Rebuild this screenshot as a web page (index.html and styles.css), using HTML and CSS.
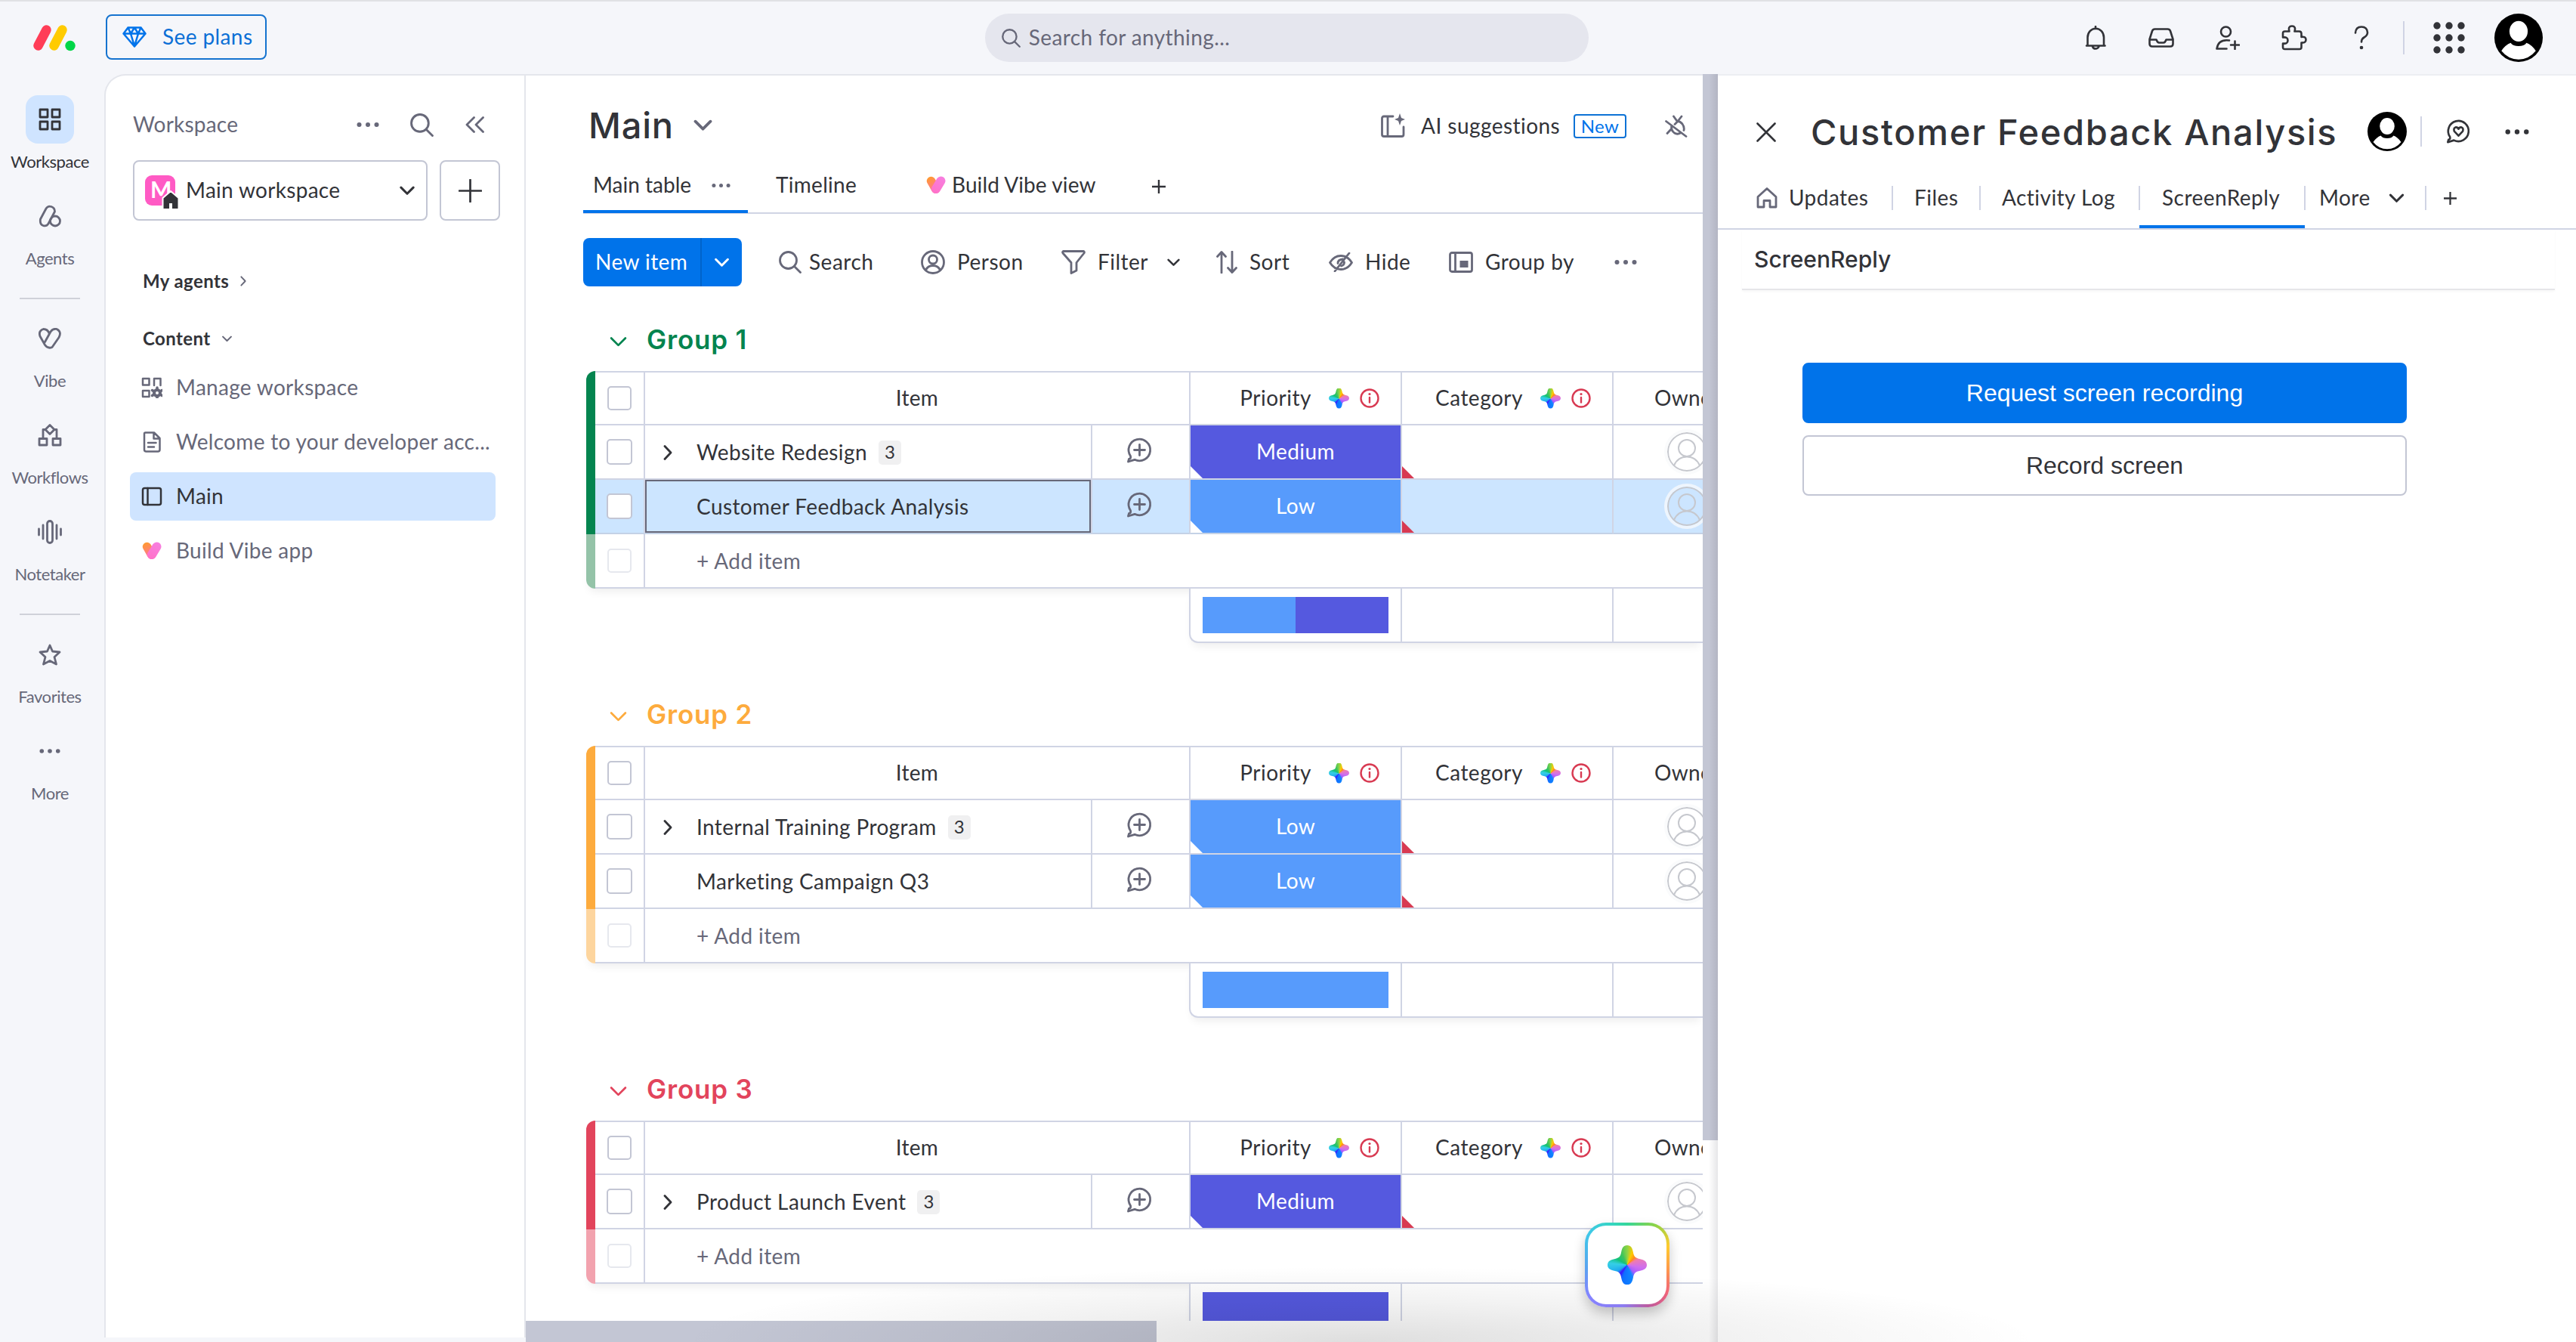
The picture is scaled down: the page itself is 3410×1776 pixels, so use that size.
FILE: index.html
```html
<!DOCTYPE html>
<html lang="en">
<head>
<meta charset="utf-8">
<title>Main</title>
<link rel="stylesheet" href="styles.css">
</head>
<body>
<svg class="defs" width="0" height="0" aria-hidden="true">
  <defs>
    <clipPath id="star" clipPathUnits="objectBoundingBox"><path d="M.5 0C.6 0 .63.07.65.17C.67.29.71.33.83.35C.93.37 1 .41 1 .5C1 .59.93.63.83.65C.71.67.67.71.65.83C.63.93.6 1 .5 1C.4 1 .37.93.35.83C.33.71.29.67.17.65C.07.63 0 .59 0 .5C0 .41.07.37.17.35C.29.33.33.29.35.17C.37.07.4 0 .5 0Z"/></clipPath>
    <linearGradient id="orange" gradientUnits="userSpaceOnUse" x1="3" y1="2" x2="14" y2="24"><stop offset="0" stop-color="#ff9a2e"/><stop offset="1" stop-color="#ff6fb0"/></linearGradient>
    <linearGradient id="pink" gradientUnits="userSpaceOnUse" x1="26" y1="2" x2="12" y2="24"><stop offset="0" stop-color="#f77fe0"/><stop offset="1" stop-color="#ff72c9"/></linearGradient>
    <symbol id="i-search" viewBox="0 0 30 30"><circle cx="12.5" cy="12.5" r="11"/><path d="M20.5 20.5L28.5 28.5"/></symbol>
    <symbol id="i-down" viewBox="0 0 18 12"><path d="M1.5 2L9 9.500L16.500 2"/></symbol>
    <symbol id="i-right" viewBox="0 0 12 20"><path d="M2 1.500L10 10L2 18.500"/></symbol>
    <symbol id="i-dots" viewBox="0 0 30 8"><g class="solid"><circle cx="3.500" cy="4" r="3"/><circle cx="15" cy="4" r="3"/><circle cx="26.500" cy="4" r="3"/></g></symbol>
    <symbol id="i-plus" viewBox="0 0 32 32"><path d="M16 1V31M1 16H31"/></symbol>
    <symbol id="i-heart" viewBox="0 0 28 26"><path d="M7 7L13.500 18.500" stroke="url(#orange)" stroke-width="12.500" stroke-linecap="round"/><path d="M21 7L14 18.500" stroke="url(#pink)" stroke-width="13" stroke-linecap="round"/></symbol>
    <symbol id="i-update" viewBox="0 0 36 36"><path d="M6.500 25.500A14.300 14.300 0 1 1 12 30.300L3.500 33L4.500 29.500Q7.500 29 6.500 25.500ZM18.500 10.500V24.500M11.500 17.500H25.500"/></symbol>
    <symbol id="i-person" viewBox="0 0 32 32"><circle cx="16" cy="16" r="14.500"/><circle cx="16" cy="12.500" r="5.500"/><path d="M6.500 26.500Q9 20.500 16 20.500T25.500 26.500"/></symbol>
    <symbol id="i-owner" viewBox="0 0 52 52"><circle cx="26" cy="26" r="25"/><circle cx="26" cy="21" r="11"/><path d="M9 44Q14 32.500 26 32.500T43 44"/></symbol>
    <symbol id="i-info" viewBox="0 0 26 26"><circle cx="13" cy="13" r="11.500"/><path d="M13 12V18.500"/><circle class="solid" cx="13" cy="7.500" r="1.600"/></symbol>
    <symbol id="i-avatar" viewBox="0 0 52 52"><circle cx="26" cy="26" r="26" fill="#000" stroke="none"/><ellipse cx="26" cy="19" rx="9.800" ry="11" fill="#fff" stroke="none"/><path d="M7.500 40Q12 33.500 17.500 31.500Q20 35 26 35T34.500 31.500Q40 33.500 44.500 40Q37 49.300 26 49.300T7.500 40Z" fill="#fff" stroke="none"/></symbol>
  </defs>
</svg>

<header class="topbar">
  <svg class="logo" viewBox="0 0 56 34"><path d="M6.500 27.500L17.500 6.500" stroke="#ff3d57" stroke-width="12.500" stroke-linecap="round"/><path d="M27.500 27.500L38.500 6.500" stroke="#ffcb00" stroke-width="12.500" stroke-linecap="round"/><circle cx="49" cy="27.500" r="6.700" fill="#00d647"/></svg>
  <button class="plans"><svg class="ic" width="32" height="28" viewBox="0 0 32 28"><path d="M7.500 1.500H24.500L30.500 9.500L16 26.500L1.500 9.500ZM1.500 9.500H30.500M11 9.500L16 26L21 9.500M7.500 1.500L11 9.500L16 1.500L21 9.500L24.500 1.500"/></svg><span>See plans</span></button>
  <div class="searchbox"><svg class="ic" width="25" height="25"><use href="#i-search"/></svg><span>Search for anything...</span></div>
  <nav class="topicons">
    <svg class="ic" width="32" height="32" viewBox="0 0 32 32"><path d="M16 1V4M4 26.500H28.500M5.500 26V15.500A10.500 11.500 0 0 1 27 15.500V26M12 27.500Q13 30.500 16 30.500T20.500 27.500"/></svg>
    <svg class="ic" width="34" height="26" viewBox="0 0 34 26"><path d="M8.500 1.500H25.500Q28 1.500 29 4L32.500 15V21Q32.500 24.500 29 24.500H5Q1.500 24.500 1.500 21V15L5 4Q6 1.500 8.500 1.500ZM1.500 15.500H10.500Q12 19.500 14 19.500H20Q22 19.500 23.500 15.500H32.500"/></svg>
    <svg class="ic" width="32" height="32" viewBox="0 0 32 32"><circle cx="13.500" cy="8" r="6.500"/><path d="M18 19.500Q3.500 17.500 1.500 30.500H14.500M25.500 20.500V31M20 25.500H31"/></svg>
    <svg class="ic" width="34" height="34" viewBox="0 0 34 34"><path d="M4.500 8.500H10.500Q8.500 1.500 14 1.500T17.500 8.500H23.500Q26.500 8.500 26.500 11.500V16Q32.500 15 32.500 19.500T26.500 23.500V29.500Q26.500 32 24 32H4.500Q2 32 2 29.500V24.500Q8.500 25.500 8.500 20.500T2 16.500V11Q2 8.500 4.500 8.500Z"/></svg>
    <svg class="ic" width="20" height="32" viewBox="0 0 20 32"><path d="M2 9.500Q2.500 1.500 10 1.500T18 9Q18 13 13.500 15.500Q10 17.500 10 21.500"/><circle class="solid" cx="10" cy="29" r="2.300"/></svg>
    <i class="vline"></i>
    <svg class="grid9" width="42" height="42" viewBox="0 0 42 42"><circle cx="5" cy="5" r="4.700"/><circle cx="21" cy="5" r="4.700"/><circle cx="37" cy="5" r="4.700"/><circle cx="5" cy="21" r="4.700"/><circle cx="21" cy="21" r="4.700"/><circle cx="37" cy="21" r="4.700"/><circle cx="5" cy="37" r="4.700"/><circle cx="21" cy="37" r="4.700"/><circle cx="37" cy="37" r="4.700"/></svg>
    <svg class="me" width="64" height="64"><use href="#i-avatar"/></svg>
  </nav>
</header>

<div class="shell">
  <aside class="rail">
    <a class="railitem on"><span><svg class="ic" width="30" height="30" viewBox="0 0 30 30"><path d="M2 2H12V12H2ZM18 2H28V12H18ZM2 18H12V28H2ZM18 18H28V28H18Z"/></svg></span>Workspace</a>
    <a class="railitem"><span><svg class="ic" width="30" height="30" viewBox="0 0 30 30"><path d="M2.500 19L10 5Q12.500 1 17 2.500T21.500 9L13 25Q10.500 29 6 27.500T2.500 19Z"/><circle cx="22" cy="21.500" r="6.500"/></svg></span>Agents</a>
    <hr>
    <a class="railitem"><span><svg class="ic" width="30" height="28" viewBox="0 0 30 28"><path d="M14 7Q12 1.500 6.500 1.500Q-.5 4 2 11L8.500 22.500Q12.500 28 18 25.500L27 12.500Q31 5 24 1.500Q19 .5 16 5L8.500 18.500"/></svg></span>Vibe</a>
    <a class="railitem"><span><svg class="ic" width="32" height="30" viewBox="0 0 32 30"><path d="M16 1.500L22 7.500L16 13.500L10 7.500ZM2 19.500H12V28H2ZM20 19.500H30V28H20ZM11 7.500H7V19.500M21 7.500H25V19.500"/></svg></span>Workflows</a>
    <a class="railitem"><span><svg class="ic" width="32" height="32" viewBox="0 0 32 32"><rect x="12.500" y="1.500" width="7" height="29" rx="3.500"/><path d="M1.500 12V20M7 7V25M25 7V25M30.500 12V20"/></svg></span>Notetaker</a>
    <hr>
    <a class="railitem"><span><svg class="ic" width="30" height="29" viewBox="0 0 30 29"><path d="M15 2L18.500 10L28 11L21 17.500L23.500 27L15 22.500L6.500 27L9 17.500L2 11L11.500 10Z"/></svg></span>Favorites</a>
    <a class="railitem"><span><svg class="ic" width="28" height="8"><use href="#i-dots"/></svg></span>More</a>
  </aside>

  <aside class="panel">
    <div class="phead"><b>Workspace</b><svg class="ic" width="30" height="8"><use href="#i-dots"/></svg><svg class="ic" width="31" height="31"><use href="#i-search"/></svg><svg class="ic" width="26" height="22" viewBox="0 0 26 22"><path d="M11.500 1.500L2 11L11.500 20.500M23.500 1.500L14 11L23.500 20.500"/></svg></div>
    <div class="pick">
      <div class="wsname"><span class="wslogo">M<svg width="24" height="26" viewBox="0 0 24 26"><path d="M12 1L22.500 10V25H1.500V10Z" fill="#323338" stroke="#fff" stroke-width="2"/><path d="M12 17V24" stroke="#fff" stroke-width="4"/></svg></span><span class="wstext">Main workspace</span><svg class="ic" width="20" height="13"><use href="#i-down"/></svg></div>
      <div class="wsadd"><svg class="ic" width="31" height="31"><use href="#i-plus"/></svg></div>
    </div>
    <h4 class="agents">My agents <svg class="ic" width="8" height="14"><use href="#i-right"/></svg></h4>
    <h4 class="content">Content <svg class="ic" width="13" height="9"><use href="#i-down"/></svg></h4>
    <ul class="menu">
      <li><svg class="ic" width="28" height="28" viewBox="0 0 28 28"><path d="M2 2H10.500V10.500H2ZM2 18H10.500V26H2ZM17 11V2H25.500V11"/><circle cx="21" cy="21" r="4" stroke-width="4"/><path d="M21 14V16M21 26V28M14.500 17.500L16 18.500M26 23.500L27.500 24.500M27.500 17.500L26 18.500M14.500 24.500L16 23.500" stroke-width="3.500"/></svg>Manage workspace</li>
      <li><svg class="ic" width="28" height="28" viewBox="0 0 28 28"><path d="M5.500 1.500H17L24.500 9V24Q24.500 26.500 22 26.500H6.500Q4 26.500 4 24V3Q4 1.500 5.500 1.500ZM16.500 2V9.500H24M9 15H19.500M9 20.500H17"/></svg>Welcome to your developer acc...</li>
      <li class="on"><svg class="ic" width="28" height="28" viewBox="0 0 28 28"><rect x="2" y="3" width="24" height="22" rx="2.500"/><path d="M8.500 3V25"/></svg>Main</li>
      <li><svg width="28" height="24"><use href="#i-heart"/></svg>Build Vibe app</li>
    </ul>
  </aside>

  <main class="board">
    <div class="boardbody">
      <div class="bhead">
        <h1>Main</h1><svg class="ic" width="25" height="16"><use href="#i-down"/></svg>
        <div class="ai"><svg class="ic" width="34" height="34" viewBox="0 0 34 34"><path d="M17 4H5Q2.500 4 2.500 6.500V28Q2.500 30.500 5 30.500H28.500Q31 30.500 31 28V18M10 4V30"/><path class="solid" d="M26 0L28 6L33 8L28 10L26 16L24 10L19 8L24 6Z"/></svg><span>AI suggestions</span><em>New</em></div>
        <svg class="ic plug" width="30" height="30" viewBox="0 0 30 30"><path d="M1.500 8.500L28 28.500M11.500 2L16.500 9M22 2L16.500 9M13 12.500L17 8.500Q20 8.500 23 12Q26 16 25 20.500M8.500 16Q8.500 21 12.500 24Q16.500 26.500 20.500 24M3 24.500L9 18"/></svg>
      </div>
      <nav class="btabs">
        <a class="on"><span>Main table</span><svg class="ic" width="25" height="7"><use href="#i-dots"/></svg></a>
        <a class="t2">Timeline</a>
        <a class="t3"><svg width="28" height="24"><use href="#i-heart"/></svg><span>Build Vibe view</span></a>
        <svg class="ic t4" width="18" height="18" viewBox="0 0 18 18"><path d="M9 0V18M0 9H18" stroke-width="2.400"/></svg>
      </nav>
      <div class="tools">
        <div class="new"><span>New item</span><i><svg class="ic" width="19" height="13"><use href="#i-down"/></svg></i></div>
        <div class="tool s"><svg class="ic" width="30" height="30"><use href="#i-search"/></svg>Search</div>
        <div class="tool"><svg class="ic" width="32" height="32"><use href="#i-person"/></svg>Person</div>
        <div class="tool"><svg class="ic" width="32" height="32" viewBox="0 0 32 32"><path d="M2.500 1.500H29.500Q31 2.500 30 4L20 16.500V27L13 30.500V16.500L2 4Q1 2.500 2.500 1.500Z"/></svg>Filter</div>
        <svg class="ic dark" width="17" height="11"><use href="#i-down"/></svg>
        <div class="tool"><svg class="ic" width="28" height="30" viewBox="0 0 28 30"><path d="M7 29V2M1.500 7.500L7 1.500L12.500 7.500M21 1V28M15.500 22.500L21 28.500L26.500 22.500"/></svg>Sort</div>
        <div class="tool"><svg class="ic" width="32" height="26" viewBox="0 0 32 26"><path d="M1.500 13.500Q7 4.500 16 4.500T30.500 13.500Q25 22.500 16 22.500T1.500 13.500ZM27 1L8 25M18.500 9Q12 9.500 12 14.500M20.500 13Q20.500 17 16.500 18"/></svg>Hide</div>
        <div class="tool"><svg class="ic" width="32" height="28" viewBox="0 0 32 28"><rect x="1.500" y="1.500" width="29" height="25" rx="2.500"/><path d="M8.500 2V26"/><rect class="solid" x="14.500" y="12" width="11" height="9"/></svg>Group by</div>
        <svg class="ic" width="30" height="8"><use href="#i-dots"/></svg>
      </div>

      <section class="group green">
        <h2><svg class="ic" width="23" height="15"><use href="#i-down"/></svg>Group 1</h2>
        <div class="table">
          <div class="row head"><i class="bar"></i><div><b class="cb"></b></div><div class="name">Item</div><div class="col">Priority<i class="star"></i><svg class="ic" width="26" height="26"><use href="#i-info"/></svg></div><div class="col">Category<i class="star"></i><svg class="ic" width="26" height="26"><use href="#i-info"/></svg></div><div class="own">Owner</div></div>
          <div class="row"><i class="bar"></i><div><b class="cb"></b></div><div class="item"><svg class="ic" width="14" height="20"><use href="#i-right"/></svg>Website Redesign<sup>3</sup></div><div class="upd"><svg class="ic" width="36" height="36"><use href="#i-update"/></svg></div><div class="st med">Medium</div><div class="cat"></div><div class="own"><svg class="ic" width="52" height="52"><use href="#i-owner"/></svg></div></div>
          <div class="row sel"><i class="bar"></i><div><b class="cb"></b></div><div class="item">Customer Feedback Analysis</div><div class="upd"><svg class="ic" width="36" height="36"><use href="#i-update"/></svg></div><div class="st low">Low</div><div class="cat"></div><div class="own"><svg class="ic" width="52" height="52"><use href="#i-owner"/></svg></div></div>
          <div class="row add"><i class="bar"></i><div><b class="cb"></b></div><div class="item">+ Add item</div></div>
        </div>
        <div class="sum"><div><i class="low"></i><i class="med"></i></div><div></div><div></div></div>
      </section>

      <section class="group yellow">
        <h2><svg class="ic" width="23" height="15"><use href="#i-down"/></svg>Group 2</h2>
        <div class="table">
          <div class="row head"><i class="bar"></i><div><b class="cb"></b></div><div class="name">Item</div><div class="col">Priority<i class="star"></i><svg class="ic" width="26" height="26"><use href="#i-info"/></svg></div><div class="col">Category<i class="star"></i><svg class="ic" width="26" height="26"><use href="#i-info"/></svg></div><div class="own">Owner</div></div>
          <div class="row"><i class="bar"></i><div><b class="cb"></b></div><div class="item"><svg class="ic" width="14" height="20"><use href="#i-right"/></svg>Internal Training Program<sup>3</sup></div><div class="upd"><svg class="ic" width="36" height="36"><use href="#i-update"/></svg></div><div class="st low">Low</div><div class="cat"></div><div class="own"><svg class="ic" width="52" height="52"><use href="#i-owner"/></svg></div></div>
          <div class="row"><i class="bar"></i><div><b class="cb"></b></div><div class="item">Marketing Campaign Q3</div><div class="upd"><svg class="ic" width="36" height="36"><use href="#i-update"/></svg></div><div class="st low">Low</div><div class="cat"></div><div class="own"><svg class="ic" width="52" height="52"><use href="#i-owner"/></svg></div></div>
          <div class="row add"><i class="bar"></i><div><b class="cb"></b></div><div class="item">+ Add item</div></div>
        </div>
        <div class="sum"><div><i class="low"></i></div><div></div><div></div></div>
      </section>

      <section class="group red">
        <h2><svg class="ic" width="23" height="15"><use href="#i-down"/></svg>Group 3</h2>
        <div class="table">
          <div class="row head"><i class="bar"></i><div><b class="cb"></b></div><div class="name">Item</div><div class="col">Priority<i class="star"></i><svg class="ic" width="26" height="26"><use href="#i-info"/></svg></div><div class="col">Category<i class="star"></i><svg class="ic" width="26" height="26"><use href="#i-info"/></svg></div><div class="own">Owner</div></div>
          <div class="row"><i class="bar"></i><div><b class="cb"></b></div><div class="item"><svg class="ic" width="14" height="20"><use href="#i-right"/></svg>Product Launch Event<sup>3</sup></div><div class="upd"><svg class="ic" width="36" height="36"><use href="#i-update"/></svg></div><div class="st med">Medium</div><div class="cat"></div><div class="own"><svg class="ic" width="52" height="52"><use href="#i-owner"/></svg></div></div>
          <div class="row add"><i class="bar"></i><div><b class="cb"></b></div><div class="item">+ Add item</div></div>
        </div>
        <div class="sum"><div><i class="med"></i></div><div></div><div></div></div>
      </section>
    </div>
    <div class="hscroll"></div>
    <button class="fab"><i class="star"></i></button>
  </main>

  <div class="gutter"><i></i></div>

  <section class="detail">
    <div class="dhead">
      <svg class="ic close" width="26" height="26" viewBox="0 0 26 26"><path d="M1.500 1.500L24.500 24.500M24.500 1.500L1.500 24.500" stroke-width="2.600"/></svg>
      <h1>Customer Feedback Analysis</h1>
      <svg width="52" height="52"><use href="#i-avatar"/></svg>
      <i class="vline"></i>
      <svg class="ic" width="34" height="34" viewBox="0 0 36 36"><path d="M6.500 25.500A14.300 14.300 0 1 1 12 30.300L3.500 33L4.500 29.500Q7.500 29 6.500 25.500ZM18.500 24L12.500 17.500Q11 13 15 12Q17.500 12 18.500 14.500Q19.500 12 22 12Q26 13 24.500 17.500Z"/></svg>
      <svg class="ic dd" width="32" height="9"><use href="#i-dots"/></svg>
    </div>
    <nav class="dtabs">
      <a class="d1"><svg class="ic" width="28" height="28" viewBox="0 0 28 28"><path d="M2 26V12.500L14 1.500L26 12.500V26H18V17.500H10V26Z"/></svg>Updates</a>
      <a class="d2">Files</a>
      <a class="d3">Activity Log</a>
      <a class="d4 on">ScreenReply</a>
      <a class="d5">More<svg class="ic dark" width="21" height="13"><use href="#i-down"/></svg></a>
      <svg class="ic dark" width="17" height="17" viewBox="0 0 18 18"><path d="M9 0V18M0 9H18" stroke-width="2.400"/></svg>
    </nav>
    <h3>ScreenReply</h3>
    <div class="acts"><button class="primary">Request screen recording</button><button>Record screen</button></div>
  </section>
</div>
<div class="shade"></div>
</body>
</html>
```
FILE: styles.css
```css
*{box-sizing:border-box;margin:0;padding:0}
body{position:relative;width:3410px;height:1776px;overflow:hidden;background:#f5f6fa;color:#323338;font:400 28px/1.2 Lato,"Open Sans",sans-serif;letter-spacing:.3px;display:flex;flex-direction:column}
.defs{position:absolute}
svg{display:block;flex:none}
button{font:inherit;letter-spacing:inherit;color:inherit;background:none;border:0}
i,em{font-style:normal}
i{display:block}
.ic{fill:none;stroke:currentColor;stroke-width:2.8;stroke-linecap:round;stroke-linejoin:round;color:#676879}
.solid{fill:currentColor;stroke:none}
.dark{color:#323338}
.vline{width:2px;background:#d0d4e4}

/* top bar */
.topbar{height:98px;flex:none;display:flex;border-top:2px solid #e0e1e4;padding:17px 44px 0 44px;align-items:flex-start}
.logo{width:56px;height:34px;margin:14px 40px 0 0;overflow:visible;fill:none}
.plans{width:213px;height:60px;border:2px solid #1573cf;border-radius:8px;color:#0b6fd6;display:flex;align-items:center;padding-left:20px;gap:21px;letter-spacing:.4px}
.plans .ic{color:#0073ea;stroke-width:2.5}
.searchbox{width:800px;height:64px;margin:-1px 0 0 951px;border-radius:32px;background:#e5e6ee;color:#676879;display:flex;align-items:center;padding-left:22px;gap:11px;letter-spacing:.4px}
.topicons{margin-left:655px;display:flex;height:64px;align-items:center;margin-top:-1px}
.topicons .ic{color:#323338;stroke-width:2.6}
.topicons .ic:nth-child(2){margin-left:54px}
.topicons .ic:nth-child(3){margin-left:55px}
.topicons .ic:nth-child(4){margin-left:55px}
.topicons .ic:nth-child(5){margin-left:62px}
.topicons .vline{height:44px;margin-left:45px}
.grid9{fill:#323338;margin-left:38px}
.me{margin-left:39px}

.shell{flex:1;display:flex;min-height:0}

/* icon rail */
.rail{width:138px;padding:28px 6px 0 0;display:flex;flex-direction:column;align-items:center;gap:26px}
.railitem{display:flex;flex-direction:column;align-items:center;gap:10px;height:102px;font-size:22px;line-height:28px;letter-spacing:-.45px;color:#676879;white-space:nowrap}
.railitem span{width:64px;height:64px;border-radius:16px;display:grid;place-items:center}
.railitem.on{color:#323338}
.railitem.on span{background:#cfe4ff}
.railitem.on .ic{color:#323338}
.rail hr{width:80px;border:0;border-top:2px solid #cfd1d9;margin:12px 0 -6px}

/* workspace panel */
.panel{width:558px;margin-bottom:6px;background:#fff;border:2px solid #e4e6ec;border-bottom:0;border-radius:28px 0 0 0;padding:43px 32px 0 32px}
.phead{height:44px;display:flex;align-items:center;padding-left:4px}
.phead b{font-weight:400;width:296px;color:#676879;letter-spacing:.2px}
.phead .ic:nth-child(3){margin-left:41px}
.phead .ic:nth-child(4){margin-left:42px}
.pick{margin:25px 0 0 4px;display:flex;gap:16px}
.wsname{width:390px;height:80px;border:2px solid #c3c6d4;border-radius:8px;display:flex;align-items:center;padding-left:14px}
.wslogo{position:relative;width:40px;height:40px;border-radius:9px;background:#ff5ac4;color:#fff;font-weight:700;font-size:30px;line-height:36px;padding-left:7px}
.wslogo svg{position:absolute;left:22px;top:20px}
.wstext{width:297px;padding-left:14px}
.wsname .ic,.wsadd .ic{color:#323338}
.wsadd{width:80px;height:80px;border:2px solid #c3c6d4;border-radius:8px;display:grid;place-items:center}
.panel h4{font-weight:700;font-size:24px;height:40px;display:flex;align-items:center;padding-left:17px;gap:15px;letter-spacing:.4px}
.agents{margin-top:60px}
.content{margin-top:36px}
.menu{list-style:none;display:flex;flex-direction:column;gap:8px;margin-top:12px;padding-top:1px}
.menu li{width:484px;height:64px;border-radius:8px;display:flex;align-items:center;padding-left:15px;gap:18px;color:#676879;white-space:nowrap}
.menu .on{background:#cfe4ff;color:#323338}
.menu .on .ic{color:#323338}
.menu .ic{stroke-width:2.5}

/* board */
.board{position:relative;width:1558px;background:#fff;border-top:2px solid #e4e6ec;display:flex;flex-direction:column}
.boardbody{height:1648px;overflow:hidden;padding-left:76px}
.hscroll{width:835px;height:28px;background:#c3c6d4}
.bhead{height:76px;margin-top:28px;display:flex;align-items:center}
h1{font:500 47px/60px Inter,sans-serif;letter-spacing:.8px;white-space:nowrap}
.bhead h1{width:139px;padding-left:7px;margin-right:7px}
.ai{display:flex;align-items:center;margin:2px 0 0 884px;color:#323338}
.ai span{margin-left:20px;width:202px;letter-spacing:.45px}
.ai em{width:70px;height:32px;border:2px solid #0d72d6;border-radius:4px;color:#0073ea;font-size:24px;line-height:28px;text-align:center}
.plug{margin:2px 0 0 51px}
.btabs{height:79px;padding-top:5px;display:flex;align-items:center;border-bottom:2px solid #d0d4e4;white-space:nowrap}
.btabs .on{position:relative;width:218px;height:100%;display:flex;align-items:center;padding-left:13px;gap:25px}
.btabs .on::after{content:"";position:absolute;left:0;right:0;bottom:-1px;height:4px;background:#0073ea}
.btabs .on span{width:132px;letter-spacing:0}
.t2{margin-left:37px;width:198px;letter-spacing:.3px}
.t3{display:flex;align-items:center;width:299px;letter-spacing:.1px}
.t3 span{margin-left:7px}
.t4{color:#323338;margin:3px 0 0 1px}
.tools{height:128px;margin-bottom:8px;display:grid;grid-template-columns:259px 188px 186px 140px 65px 149px 159px 219px auto;align-items:center}
.new{width:210px;height:64px;border-radius:8px;background:#0073ea;color:#fff;display:flex;align-items:center;overflow:hidden}
.new span{width:155px;padding-left:16px;letter-spacing:.45px}
.new i{height:100%;flex:1;border-left:2px solid #0063cb;display:grid;place-items:center}
.new .ic{color:#fff}
.tool{display:flex;align-items:center;gap:16px;letter-spacing:.5px}
.tool.s{gap:10px}

/* groups */
.group{height:496px}
.green{--c:#04844f;--l:#94c3a8}
.yellow{--c:#fdab3d;--l:#fdd59e}
.red{--c:#e2445c;--l:#f2a2ae}
.group h2{height:72px;display:flex;align-items:center;padding:0 0 13px 35px;gap:26px;color:var(--c);font:600 35px/40px Inter,sans-serif;letter-spacing:.8px}
.group h2 .ic{color:var(--c);margin-top:8px;stroke-width:2.2}
.table{margin-left:4px;border-radius:12px 0 0 12px;box-shadow:0 8px 12px -4px rgba(0,0,0,.07)}
.row{height:72px;display:grid;grid-template-columns:12px 66px 592px 130px 280px 280px 118px}
.row>div{border-right:2px solid #d0d4e4;border-bottom:2px solid #d0d4e4;display:flex;align-items:center;justify-content:center;white-space:nowrap;background:#fff}
.row>div:last-child{border-right:0;overflow:hidden}
.bar{background:var(--c)}
.head>div{border-top:2px solid #d0d4e4}
.head .bar{border-top-left-radius:12px}
.head .name{grid-column:span 2}
.head .col{justify-content:flex-end;padding-right:28px;letter-spacing:.5px}
.head .col .ic{color:#d83a52;stroke-width:2.4;margin-left:14px}
.star{width:27px;height:27px;margin-left:23px;clip-path:url(#star);background:conic-gradient(#8bd346 0deg,#ffcb00 22deg,#ff8a1e 45deg,#f07cae 62deg,#cf6eee 100deg,#a85cff 138deg,#0f86ff 158deg,#0f6dff 200deg,#3b14ff 218deg,#1fa8f0 238deg,#35cfe6 275deg,#12c27a 300deg,#3fc45a 335deg,#8bd346 360deg)}
.row>.own{justify-content:flex-start;padding-left:54px}
.row:not(.head)>.own{padding-left:71px}
.own .ic{color:#c6c8ce;stroke-width:2;background:#fff;border-radius:50%;box-shadow:0 0 0 4px #fafbfc}
.cb{width:34px;height:34px;border:2px solid #c3c6d4;border-radius:5px;background:#fff}
.head .cb{width:32px;height:32px}
.row>.item{justify-content:flex-start;padding-left:68px;padding-top:1px;position:relative;letter-spacing:.4px}
.item .ic{position:absolute;left:23px;top:26px;color:#323338}
.item sup{width:30px;height:32px;margin-left:15px;border-radius:5px;background:#f0f0f1;font-size:24px;line-height:30px;text-align:center;letter-spacing:0}
.row>.upd{padding:0 4px 4px 0}
.row .st{color:#fff;position:relative;letter-spacing:.4px}
.row .med,.sum .med{background:#5559df}
.row .low,.sum .low{background:#579bfc}
.row>.st{background-clip:padding-box}
.st::before,.cat::before{content:"";position:absolute;left:0;bottom:0;width:16px;height:16px;background:#fff;clip-path:polygon(0 0,100% 100%,0 100%)}
.cat{position:relative}
.cat::before{background:#d83a52}
.sel>div{background-color:#cce5ff;border-bottom-color:#c4d2e6}
.sel .item{box-shadow:inset 0 0 0 2px #676879}
.sel .own .ic{background:#cce5ff;box-shadow:0 0 0 4px #eef5fd}
.add .bar{background:var(--l);border-bottom-left-radius:12px}
.add>.item{grid-column:3/-1;color:#676879}
.add .cb{width:32px;height:32px;border-color:#e6e8ee}
.sum{margin-left:802px;height:72px;display:grid;grid-template-columns:280px 280px 118px;border:2px solid #d0d4e4;border-width:0 0 2px 2px;border-bottom-left-radius:12px;background:#fff;box-shadow:0 8px 12px -4px rgba(0,0,0,.07)}
.sum>div{border-right:2px solid #d0d4e4;display:flex;padding:11px 16px}
.sum>div:last-child{border-right:0}
.sum i{flex:1;height:48px}

.fab{position:absolute;z-index:3;left:1402px;top:1518px;width:112px;height:112px;border:4px solid transparent;border-radius:28px;background:linear-gradient(#fff,#fff) padding-box,conic-gradient(#35d69a 0deg,#8bd346 35deg,#ffcb2e 65deg,#ff9a4a 95deg,#f0647a 125deg,#c05a9a 150deg,#8c7cf0 185deg,#8583ff 230deg,#5aa2f0 265deg,#3fc8e8 310deg,#35d6c0 340deg,#35d69a 360deg) border-box;box-shadow:0 8px 16px rgba(0,0,0,.22);display:grid;place-items:center}
.fab .star{width:52px;height:52px;margin:0}

.gutter{width:20px;background:linear-gradient(90deg,#fff 40%,#e6e6e8)}
.gutter i{height:1411px;background:linear-gradient(90deg,#c3c6d4 40%,#b3b5c3)}

/* item detail */
.detail{flex:1;background:#fff;border-top:2px solid #eceef2}
.dhead{display:flex;align-items:center;height:52px;margin-top:48px;padding-left:51px}
.dhead h1{margin:2px 0 0 46px;width:737px;letter-spacing:1.65px}
.close{color:#323338;margin-top:2px}
.dhead .vline{height:40px;margin:0 31px 0 18px}
.dhead .ic{color:#323338}
.dd{margin-left:45px}
.dtabs{height:104px;padding:22px 0 0 51px;display:flex;align-items:center;border-bottom:2px solid #d0d4e4;letter-spacing:.45px;white-space:nowrap}
.dtabs a{height:32px;border-right:2px solid #d0d4e4;display:flex;align-items:center}
.d1{width:181px;gap:15px}
.dtabs .d2{width:116px;padding-left:28px}
.dtabs .d3{width:211px;padding-left:28px}
.dtabs .d4{width:219px;padding-left:29px;position:relative}
.d4::after{content:"";position:absolute;left:-1px;width:219px;bottom:-24px;height:4px;background:#0073ea}
.dtabs .d5{width:160px;padding-left:18px;gap:24px;margin-right:23px}
.detail h3{margin:0 28px 0 32px;padding-left:16px;height:80px;border-bottom:2px solid #e6e6e9;box-shadow:0 2px 3px rgba(0,0,0,.03);font:500 30px/78px Inter,sans-serif;letter-spacing:0}
.acts{margin:96px 0 0 112px;width:800px;display:flex;flex-direction:column;gap:16px}
.acts button{height:80px;border:2px solid #c3c6d4;border-radius:8px;font:32px/76px "Liberation Sans",Arial,sans-serif;letter-spacing:0}
.acts .primary{background:#0073ea;border-color:#0073ea;color:#fff}

.shade{position:absolute;left:900px;bottom:0;width:1800px;height:100px;pointer-events:none;background:radial-gradient(ellipse 50% 100% at 50% 100%,rgba(0,0,0,.13),rgba(0,0,0,.05) 55%,transparent)}
```
